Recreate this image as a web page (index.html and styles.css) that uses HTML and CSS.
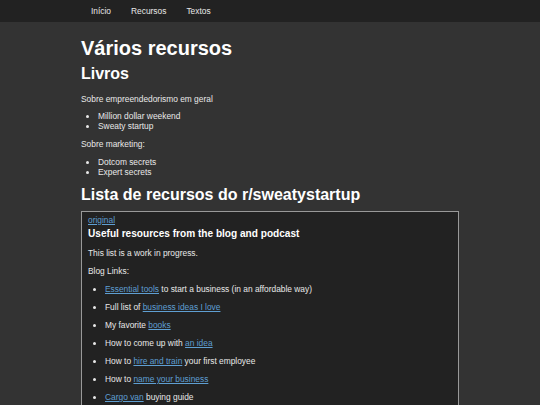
FILE: index.html
```html
<!DOCTYPE html>
<html lang="pt">
<head>
<meta charset="utf-8">
<title>Vários recursos</title>
<link rel="stylesheet" href="styles.css">
</head>
<body>
<nav class="topnav">
  <div class="topnav-inner">
    <a href="#">Início</a>
    <a href="#">Recursos</a>
    <a href="#">Textos</a>
  </div>
</nav>
<main class="container">
  <h1>Vários recursos</h1>
  <h2>Livros</h2>
  <p class="lead">Sobre empreendedorismo em geral</p>
  <ul>
    <li>Million dollar weekend</li>
    <li>Sweaty startup</li>
  </ul>
  <p>Sobre marketing:</p>
  <ul>
    <li>Dotcom secrets</li>
    <li>Expert secrets</li>
  </ul>
  <h2>Lista de recursos do r/sweatystartup</h2>
  <section class="embed">
    <a class="orig" href="#">original</a>
    <h3>Useful resources from the blog and podcast</h3>
    <p>This list is a work in progress.</p>
    <p>Blog Links:</p>
    <ul>
      <li><p><a href="#">Essential tools</a> to start a business (in an affordable way)</p></li>
      <li><p>Full list of <a href="#">business ideas I love</a></p></li>
      <li><p>My favorite <a href="#">books</a></p></li>
      <li><p>How to come up with <a href="#">an idea</a></p></li>
      <li><p>How to <a href="#">hire and train</a> your first employee</p></li>
      <li><p>How to <a href="#">name your business</a></p></li>
      <li><p><a href="#">Cargo van</a> buying guide</p></li>
      <li><p>How to <a href="#">get your first customers</a></p></li>
    </ul>
  </section>
</main>
</body>
</html>
```
FILE: styles.css
```css
html, body {
  margin: 0;
  padding: 0;
}
body {
  background: #333333;
  color: #e8e8e8;
  font-family: "Liberation Sans", Arial, sans-serif;
  font-size: 8.4px;
  line-height: 9.7px;
}
.topnav {
  background: #222222;
  height: 22px;
}
.topnav-inner {
  width: 378px;
  margin: 0 auto;
  display: flex;
  height: 22px;
  align-items: center;
}
.topnav a {
  color: #e8e8e8;
  text-decoration: none;
  padding: 0 10px;
  font-size: 8.4px;
  line-height: 22px;
}
.container {
  width: 378px;
  margin: 0 auto;
}
h1 {
  color: #ffffff;
  font-size: 20px;
  line-height: 23px;
  margin: 14.6px 0 0;
}
h2 {
  color: #ffffff;
  font-size: 16px;
  line-height: 18.4px;
  margin: 5.3px 0 7px;
}
h2 + .lead {
  margin-top: 11.3px;
}
p {
  margin: 8.2px 0;
}
ul {
  margin: 8.2px 0;
  padding-left: 17px;
}
.embed {
  background: #222222;
  border: 1px solid #999999;
  padding: 3.6px 6px 6px;
}
.embed p,
.embed ul {
  margin: 8.3px 0;
}
.embed a {
  color: #5f9fd2;
}
.orig {
  display: inline-block;
  vertical-align: top;
}
.embed h3 {
  color: #ffffff;
  font-size: 10.1px;
  line-height: 11.6px;
  margin: 2.4px 0 9.9px;
}
```
